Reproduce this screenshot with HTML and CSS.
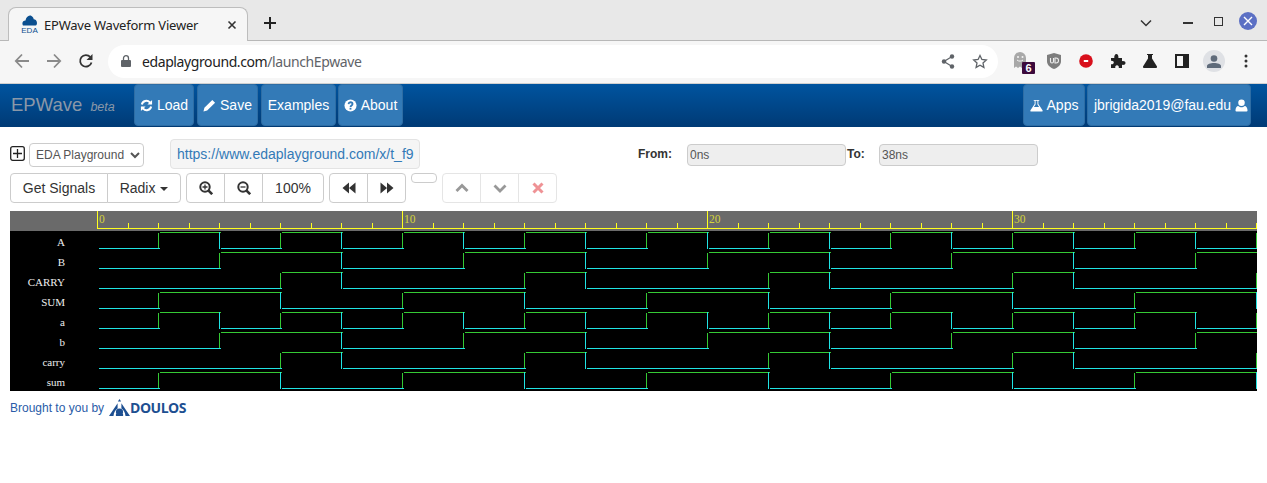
FILE: index.html
```html
<!DOCTYPE html>
<html lang="en">
<head>
  <meta charset="UTF-8" />
  <title>EPWave Waveform Viewer</title>
  <link rel="stylesheet" href="styles.css">
</head>
<body>
  <!-- Browser window -->
  <div class="tabstrip">
    <div class="tab">
      <div class="favicon">
        <svg width="16" height="11" viewBox="0 0 16 11"><path fill="#0b4f8f" d="M1 10.500C-.5 8 1 5.500 3.500 5.500 4 2 7-.5 9.500 1c1.500.8 2 2 2.200 3.300 2.300 0 4 2.600 3 5.200-.2.600-.6 1-1.200 1z"/></svg>
        <span class="favicon-text">EDA</span>
      </div>
      <span class="tab-title">EPWave Waveform Viewer</span>
      <svg class="tab-close" width="10" height="10" viewBox="0 0 10 10"><path stroke="#333" stroke-width="1.600" d="M1.500 1.500l7 7M8.500 1.500l-7 7"/></svg>
    </div>
    <svg class="new-tab" width="14" height="14" viewBox="0 0 14 14"><path stroke="#222" stroke-width="2" d="M7 1v12M1 7h12"/></svg>
    <div class="window-controls">
      <svg class="win-chevron" width="12" height="8" viewBox="0 0 12 8"><path fill="none" stroke="#333" stroke-width="1.500" d="M1 1.500l5 5 5-5"/></svg>
      <span class="win-min"></span>
      <span class="win-max"></span>
      <span class="win-close">
        <svg width="10" height="10" viewBox="0 0 10 10"><path stroke="#fff" stroke-width="1.400" d="M1 1l8 8M9 1l-8 8"/></svg>
      </span>
    </div>
  </div>

  <div class="toolbar">
    <span class="slot"><svg width="16" height="16" viewBox="0 0 16 16"><path fill="none" stroke="#8a8a8a" stroke-width="1.800" d="M15 8H2M8 1.500L1.800 8 8 14.500"/></svg></span>
    <span class="slot"><svg width="16" height="16" viewBox="0 0 16 16"><path fill="none" stroke="#8a8a8a" stroke-width="1.800" d="M1 8h13M8 1.500L14.200 8 8 14.500"/></svg></span>
    <span class="slot"><svg width="16" height="16" viewBox="0 0 16 16"><path fill="none" stroke="#333" stroke-width="1.800" d="M13.500 9.500A5.800 5.800 0 1 1 12.300 4"/><path fill="#333" d="M14.500 1v6h-6z"/></svg></span>
    <div class="omnibox">
      <svg class="lock" width="10" height="12" viewBox="0 0 10 12"><path fill="#5f6368" d="M1 5h8a1 1 0 0 1 1 1v5a1 1 0 0 1-1 1H1a1 1 0 0 1-1-1V6a1 1 0 0 1 1-1z"/><path fill="none" stroke="#5f6368" stroke-width="1.300" d="M2.500 5V3.200a2.500 2.500 0 0 1 5 0V5"/></svg>
      <span class="url">edaplayground.com<span class="url-path">/launchEpwave</span></span>
      <span class="omni-icons">
        <svg width="14" height="15" viewBox="0 0 14 15"><path fill="none" stroke="#5f6368" stroke-width="1.200" d="M11 2.500L3 7.500l8 5"/><circle cx="11" cy="2.500" r="2.200" fill="#5f6368"/><circle cx="3" cy="7.500" r="2.200" fill="#5f6368"/><circle cx="11" cy="12.500" r="2.200" fill="#5f6368"/></svg>
        <svg width="16" height="15" viewBox="0 0 16 15"><path fill="none" stroke="#5f6368" stroke-width="1.300" d="M8 1.500l1.900 4 4.400.5-3.300 3 .9 4.400L8 11.200l-3.900 2.200.9-4.400-3.300-3 4.400-.5z"/></svg>
      </span>
    </div>
    <div class="extensions">
      <span class="slot ghost">
        <svg width="14" height="18" viewBox="0 0 14 18"><path fill="#a8a8a8" d="M1 7a6 6 0 0 1 12 0v10l-2-1.500L9 17l-2-1.500L5 17l-2-1.500L1 17z"/><circle cx="5" cy="6" r="1" fill="#f5f5f5"/><circle cx="9.500" cy="6" r="1" fill="#f5f5f5"/><path fill="none" stroke="#f5f5f5" d="M4 9c1.500 1.500 4.500 1.500 6 0"/></svg>
        <span class="badge">6</span>
      </span>
      <span class="slot"><svg width="14" height="16" viewBox="0 0 14 16"><path fill="#7d7d7d" d="M7 0l7 2v6c0 4-3 6.500-7 8-4-1.500-7-4-7-8V2z"/><path fill="none" stroke="#eee" stroke-width="1.100" d="M3.500 5v3.500a1.500 1.500 0 0 0 3 0V5M8 5v5h1a2.500 2.500 0 0 0 0-5z"/></svg></span>
      <span class="slot"><svg width="14" height="14" viewBox="0 0 14 14"><circle cx="7" cy="7" r="6.800" fill="#d8101c"/><rect x="4.800" y="6" width="4.400" height="2" fill="#fff"/></svg></span>
      <span class="slot"><svg width="16" height="16" viewBox="0 0 16 16"><path fill="#222" d="M1 5h3.300C4 2.800 5 1 6.400 1s2.300 1.800 2 4H12v3.200c2-.4 3.500.4 3.500 1.800S14 12.200 12 11.800V15H8.800c.3-1.700-.6-2.700-1.800-2.700S5 13.300 5.300 15H1v-3.700c1.600.3 2.800-.6 2.800-1.800S2.600 7.500 1 7.800z"/></svg></span>
      <span class="slot"><svg width="14" height="14" viewBox="0 0 14 14"><path fill="#222" d="M4 0h6v1H9v3.500l5 8c.4.800 0 1.500-1 1.500H1c-1 0-1.400-.7-1-1.500l5-8V1H4z"/></svg></span>
      <span class="slot"><svg width="14" height="14" viewBox="0 0 14 14"><path fill="#222" d="M0 0h14v14H0zM2 2v10h6V2z"/></svg></span>
      <span class="slot"><span class="avatar"><svg width="14" height="13" viewBox="0 0 14 13"><circle cx="7" cy="3.500" r="3.300" fill="#5f6b7a"/><path fill="#5f6b7a" d="M0 13v-2c0-2 3.500-3 7-3s7 1 7 3v2z"/></svg></span></span>
      <span class="slot"><svg width="4" height="14" viewBox="0 0 4 14"><circle cx="2" cy="2" r="1.500" fill="#333"/><circle cx="2" cy="7" r="1.500" fill="#333"/><circle cx="2" cy="12" r="1.500" fill="#333"/></svg></span>
    </div>
  </div>

  <!-- Page navbar -->
  <nav class="navbar">
    <div class="brand">EPWave <small>beta</small></div>
    <a class="nav-btn btn-load">
      <svg class="icon" viewBox="0 0 14 14"><path fill="none" stroke="#fff" stroke-width="2.200" d="M2 6a5 5 0 0 1 8.600-2.400L12 5M12 8a5 5 0 0 1-8.600 2.400L2 9"/><path fill="#fff" d="M13 1v5H8zM1 13V8h5z"/></svg>
      Load</a>
    <a class="nav-btn btn-save">
      <svg class="icon" viewBox="0 0 14 14"><path fill="#fff" d="M10 1l3 3-8.500 8.500L.5 13.500l1-4zM9 3.500l1.500 1.500"/></svg>
      Save</a>
    <a class="nav-btn btn-examples">Examples</a>
    <a class="nav-btn btn-about">
      <svg class="icon" viewBox="0 0 14 14"><circle cx="7" cy="7" r="6.500" fill="#fff"/><path fill="none" stroke="#337ab7" stroke-width="1.900" d="M4.800 5.400C5 4 6 3.500 7 3.500c1.200 0 2.200.8 2.200 1.900 0 1.600-2.200 1.600-2.200 3.100"/><rect x="6" y="9.500" width="2" height="1.900" fill="#337ab7"/></svg>
      About</a>
    <a class="nav-btn btn-apps nav-right">
      <svg class="icon" viewBox="0 0 14 14"><path fill="#fff" d="M4 1h6v1H9v3.500l4.500 6.500c.4.800 0 1.500-1 1.500h-11c-1 0-1.400-.7-1-1.500L5 5.500V2H4zM6 2v3.800L4.200 8.500h5.600L8 5.800V2z"/></svg>
      Apps</a>
    <a class="nav-btn btn-user">jbrigida2019@fau.edu
      <svg class="icon" viewBox="0 0 14 14"><circle cx="7" cy="4" r="3.500" fill="#fff"/><path fill="#fff" d="M1.500 13.500c-.6 0-1-.4-1-1 0-3 1.500-5 3-5 1 1 2.300 1.400 3.500 1.400s2.500-.4 3.500-1.400c1.500 0 3 2 3 5 0 .6-.4 1-1 1z"/></svg>
    </a>
  </nav>

  <main class="page">
    <div class="source-row">
      <svg class="expand" width="15" height="15" viewBox="0 0 15 15"><rect x=".7" y=".7" width="13.600" height="13.600" rx="2" fill="none" stroke="#222" stroke-width="1.300"/><path stroke="#222" stroke-width="1.300" d="M7.500 3v9M3 7.500h9"/></svg>
      <select class="source-select"><option>EDA Playground</option></select>
      <div class="run-url">https://www.edaplayground.com/x/t_f9</div>
      <label class="range-label label-from">From:</label>
      <input class="range-input" type="text" value="0ns" readonly />
      <label class="range-label label-to">To:</label>
      <input class="range-input" type="text" value="38ns" readonly />
    </div>

    <div class="button-row">
      <div class="btn-group">
        <button class="btn btn-signals">Get Signals</button>
        <button class="btn btn-radix">Radix <span class="caret"></span></button>
      </div>
      <div class="btn-group">
        <button class="btn btn-icon"><svg class="icon" viewBox="0 0 14 14"><circle cx="6" cy="6" r="4.700" fill="none" stroke="#333" stroke-width="2"/><path stroke="#333" stroke-width="2.600" d="M9.300 9.300l3.900 3.900"/><path stroke="#333" stroke-width="1.300" d="M6 3.500v5M3.500 6h5"/></svg></button>
        <button class="btn btn-icon"><svg class="icon" viewBox="0 0 14 14"><circle cx="6" cy="6" r="4.700" fill="none" stroke="#333" stroke-width="2"/><path stroke="#333" stroke-width="2.600" d="M9.300 9.300l3.900 3.900"/><path stroke="#333" stroke-width="1.300" d="M3.500 6h5"/></svg></button>
        <button class="btn btn-zoom">100%</button>
      </div>
      <div class="btn-group">
        <button class="btn btn-icon"><svg class="icon" viewBox="0 0 14 14"><path fill="#333" d="M7 1.500v11L.5 7zM13.500 1.500v11L7 7z"/></svg></button>
        <button class="btn btn-icon"><svg class="icon" viewBox="0 0 14 14"><path fill="#333" d="M.5 1.500v11L7 7zM7 1.500v11L13.500 7z"/></svg></button>
      </div>
      <button class="btn-empty"></button>
      <div class="btn-group group-disabled">
        <button class="btn btn-icon"><svg class="icon" viewBox="0 0 14 14"><path fill="none" stroke="#333" stroke-width="2.800" d="M1.500 10L7 4.500l5.500 5.500"/></svg></button>
        <button class="btn btn-icon"><svg class="icon" viewBox="0 0 14 14"><path fill="none" stroke="#333" stroke-width="2.800" d="M1.500 4.500L7 10l5.500-5.500"/></svg></button>
        <button class="btn btn-icon btn-remove"><svg class="icon" viewBox="0 0 14 14"><path stroke="#e0282e" stroke-width="3" d="M2.500 2.500l9 9M11.500 2.500l-9 9"/></svg></button>
      </div>
    </div>

    <!-- Waveform canvas, coordinates are page pixels -->
    <svg class="waves" width="1247" height="180" viewBox="10 211 1247 180">
      <defs>
        <g id="sig-a">
          <path class="hi" d="M160 232.500H221M282 232.500H343M404 232.500H465M526 232.500H587M648 232.500H709M770 232.500H831M892 232.500H953M1014 232.500H1075M1136 232.500H1197M158.500 233V249M280.500 233V249M402.500 233V249M524.500 233V249M646.500 233V249M768.500 233V249M890.500 233V249M1012.500 233V249M1134.500 233V249M1256.500 233V249"/>
          <path class="lo" d="M99 248.500H160M221 248.500H282M343 248.500H404M465 248.500H526M587 248.500H648M709 248.500H770M831 248.500H892M953 248.500H1014M1075 248.500H1136M1197 248.500H1258M219.500 232V249M341.500 232V249M463.500 232V249M585.500 232V249M707.500 232V249M829.500 232V249M951.500 232V249M1073.500 232V249M1195.500 232V249"/>
        </g>
        <g id="sig-b">
          <path class="hi" d="M221 232.500H343M465 232.500H587M709 232.500H831M953 232.500H1075M1197 232.500H1258M219.500 233V249M463.500 233V249M707.500 233V249M951.500 233V249M1195.500 233V249"/>
          <path class="lo" d="M99 248.500H221M343 248.500H465M587 248.500H709M831 248.500H953M1075 248.500H1197M341.500 232V249M585.500 232V249M829.500 232V249M1073.500 232V249"/>
        </g>
        <g id="sig-carry">
          <path class="hi" d="M282 232.500H343M526 232.500H587M770 232.500H831M1014 232.500H1075M280.500 233V249M524.500 233V249M768.500 233V249M1012.500 233V249M1256.500 233V249"/>
          <path class="lo" d="M99 248.500H282M343 248.500H526M587 248.500H770M831 248.500H1014M1075 248.500H1258M341.500 232V249M585.500 232V249M829.500 232V249M1073.500 232V249"/>
        </g>
        <g id="sig-sum">
          <path class="hi" d="M160 232.500H282M404 232.500H526M648 232.500H770M892 232.500H1014M1136 232.500H1258M158.500 233V249M402.500 233V249M646.500 233V249M890.500 233V249M1134.500 233V249"/>
          <path class="lo" d="M99 248.500H160M282 248.500H404M526 248.500H648M770 248.500H892M1014 248.500H1136M280.500 232V249M524.500 232V249M768.500 232V249M1012.500 232V249M1256.500 232V249"/>
        </g>
      </defs>

      <rect x="10" y="211" width="1247" height="180" fill="#000"/>
      <rect x="10" y="211" width="1247" height="20" fill="#6a6a6a"/>
      <path class="ruler" d="M97 228.500H1257M97.500 211V229M402.500 211V229M707.500 211V229M1012.500 211V229M128.500 223V228M158.500 223V228M189.500 223V228M219.500 223V228M250.500 223V228M280.500 223V228M311.500 223V228M341.500 223V228M372.500 223V228M433.500 223V228M463.500 223V228M494.500 223V228M524.500 223V228M555.500 223V228M585.500 223V228M616.500 223V228M646.500 223V228M677.500 223V228M738.500 223V228M768.500 223V228M799.500 223V228M829.500 223V228M860.500 223V228M890.500 223V228M921.500 223V228M951.500 223V228M982.500 223V228M1043.500 223V228M1073.500 223V228M1104.500 223V228M1134.500 223V228M1165.500 223V228M1195.500 223V228M1226.500 223V228M1256.500 223V228"/>
      <text class="tick-num" x="99" y="223">0</text>
      <text class="tick-num" x="404" y="223">10</text>
      <text class="tick-num" x="709" y="223">20</text>
      <text class="tick-num" x="1014" y="223">30</text>

      <text class="sig-name" x="65" y="246">A</text>
      <text class="sig-name" x="65" y="266">B</text>
      <text class="sig-name" x="65" y="286">CARRY</text>
      <text class="sig-name" x="65" y="306">SUM</text>
      <text class="sig-name" x="65" y="326">a</text>
      <text class="sig-name" x="65" y="346">b</text>
      <text class="sig-name" x="65" y="366">carry</text>
      <text class="sig-name" x="65" y="386">sum</text>

      <use href="#sig-a"/>
      <use href="#sig-b" y="20"/>
      <use href="#sig-carry" y="40"/>
      <use href="#sig-sum" y="60"/>
      <use href="#sig-a" y="80"/>
      <use href="#sig-b" y="100"/>
      <use href="#sig-carry" y="120"/>
      <use href="#sig-sum" y="140"/>
    </svg>

    <div class="credit">
      <a class="credit-link">Brought to you by</a>
      <span class="doulos">
        <svg width="21" height="17" viewBox="0 0 21 17"><path fill="#1d4f91" d="M10.500 0l1.600 2.600H8.900zM8.600 4.200L0 17h4.500c.3-3.500 1.800-6 4.100-7.500zM12.400 4.200L21 17h-4.500c-.3-3.500-1.800-6-4.100-7.500z"/><circle cx="10.500" cy="13" r="3.600" fill="#1d4f91"/><rect x="6.900" y="15" width="7.200" height="2" fill="#1d4f91"/></svg>
        <span class="doulos-name">DOULOS</span>
      </span>
    </div>
  </main>
</body>
</html>
```

FILE: styles.css
```css
/* Base styles */
* {
  box-sizing: border-box;
}

body {
  margin: 0;
  font-family: "Liberation Sans", Arial, sans-serif;
  font-size: 14px;
  color: #333;
  background: #fff;
}

/* Browser window */
.tabstrip {
  display: flex;
  align-items: flex-end;
  height: 41px;
  background: #e8e8e8;
  border-bottom: 1px solid #b8b8b8;
}

.tab {
  display: flex;
  align-items: center;
  width: 240px;
  height: 34px;
  margin-left: 8px;
  margin-bottom: -1px;
  padding-left: 12px;
  background: #f6f6f6;
  border: 1px solid #bdbdbd;
  border-bottom: none;
  border-radius: 8px 8px 0 0;
  font-family: "Noto Sans", sans-serif;
  font-size: 13px;
  letter-spacing: -0.22px;
  color: #222;
}

.favicon {
  display: flex;
  flex-direction: column;
  align-items: center;
  width: 17px;
  margin-right: 6px;
}

.favicon svg {
  display: block;
}

.favicon-text {
  font-family: "Liberation Sans", sans-serif;
  font-size: 8px;
  line-height: 8px;
  letter-spacing: 0;
  margin-top: 1px;
  color: #0b4f8f;
}

.tab-close {
  margin-left: auto;
  margin-right: 10px;
}

.new-tab {
  margin-left: 15px;
  margin-bottom: 10px;
}

.window-controls {
  display: flex;
  align-items: center;
  margin-left: auto;
  height: 40px;
  padding-top: 2px;
  padding-right: 10px;
}

.win-chevron {
  margin-top: 4px;
  margin-right: 31px;
}

.win-min {
  width: 10px;
  height: 2px;
  margin-top: 4px;
  margin-right: 21px;
  background: #333;
}

.win-max {
  width: 9px;
  height: 9px;
  margin-right: 16px;
  border: 1.500px solid #333;
}

.win-close {
  display: flex;
  align-items: center;
  justify-content: center;
  width: 18px;
  height: 18px;
  border-radius: 50%;
  background: #5c70c4;
}

.toolbar {
  display: flex;
  align-items: center;
  height: 43px;
  padding: 0 5px 2px 6px;
  background: #f6f6f6;
  border-bottom: 1px solid #d0d0d0;
}

.slot {
  display: flex;
  align-items: center;
  justify-content: center;
  position: relative;
  width: 32px;
  height: 32px;
}

.omnibox {
  display: flex;
  align-items: center;
  flex: 1;
  height: 33px;
  margin-left: 6px;
  padding-left: 13px;
  background: #fff;
  border-radius: 17px;
  font-family: "Noto Sans", sans-serif;
  font-size: 14px;
  letter-spacing: -0.4px;
  color: #222;
}

.url {
  margin-left: 11px;
}

.url-path {
  color: #5f6368;
}

.omni-icons {
  display: flex;
  align-items: center;
  gap: 17px;
  margin-left: auto;
  margin-right: 10px;
}

.extensions {
  display: flex;
  margin-left: 8px;
}

.badge {
  position: absolute;
  top: 17px;
  left: 16px;
  width: 13px;
  height: 12px;
  background: #3c0a3c;
  border-radius: 1px;
  font-family: "Liberation Sans", sans-serif;
  font-size: 11px;
  font-weight: bold;
  line-height: 12px;
  text-align: center;
  color: #fff;
}

.ghost svg {
  margin-top: -3px;
  margin-left: -4px;
}

.avatar {
  display: flex;
  align-items: center;
  justify-content: center;
  width: 22px;
  height: 22px;
  border-radius: 50%;
  background: #dfe1e5;
}

/* Navbar */
.navbar {
  display: flex;
  height: 43px;
  background: linear-gradient(to bottom, #00549f, #003a75);
}

.brand {
  width: 134px;
  padding-left: 11px;
  font-size: 18.500px;
  line-height: 42px;
  color: #8a98a8;
}

.brand small {
  margin-left: 3px;
  font-size: 12.500px;
  font-style: italic;
}

.nav-btn {
  display: flex;
  align-items: center;
  justify-content: center;
  gap: 4px;
  height: 42px;
  margin-right: 3px;
  background: #337ab7;
  border: 1px solid #2e6da4;
  border-radius: 4px;
  color: #fff;
}

.btn-load { width: 60px; }
.btn-save { width: 61px; }
.btn-examples { width: 75px; margin-right: 2px; }
.btn-about { width: 65px; }
.btn-apps { width: 62px; margin-right: 2px; }
.btn-user { width: 164px; padding-left: 4px; }

.nav-right {
  margin-left: auto;
}

.navbar .btn-user {
  margin-right: 16px;
}

.icon {
  width: 13px;
  height: 13px;
  flex: none;
}

/* Page controls */
.page {
  padding: 12px 10px 0;
}

.source-row {
  display: flex;
  align-items: center;
  height: 30px;
}

.expand {
  flex: none;
  margin-right: 4px;
  margin-top: -1px;
}

.source-select {
  width: 115px;
  height: 24px;
  margin-top: 2px;
  padding-left: 2px;
  font-family: "Liberation Sans", sans-serif;
  font-size: 12px;
  color: #555;
  background: #fff;
  border: 1px solid #ccc;
  border-radius: 4px;
}

.run-url {
  width: 250px;
  height: 30px;
  margin-left: 26px;
  padding-left: 6px;
  overflow: hidden;
  white-space: nowrap;
  font-size: 14px;
  line-height: 28px;
  color: #337ab7;
  background: #f5f5f5;
  border: 1px solid #e3e3e3;
  border-radius: 4px;
}

.range-label {
  font-size: 12px;
  font-weight: bold;
}

.label-from {
  margin-left: 218px;
  width: 49px;
}

.label-to {
  width: 33px;
  padding-left: 1px;
}

.range-input {
  width: 159px;
  height: 22px;
  margin-top: 1px;
  padding: 0 2px;
  font-family: "Liberation Sans", sans-serif;
  font-size: 12px;
  color: #555;
  background: #eee;
  border: 1px solid #ccc;
  border-radius: 4px;
}

.button-row {
  display: flex;
  align-items: flex-start;
  gap: 5px;
  margin-top: 4px;
}

.btn-group {
  display: flex;
}

.btn {
  height: 30px;
  margin-left: -1px;
  padding: 0;
  font-family: "Liberation Sans", sans-serif;
  font-size: 14px;
  color: #333;
  background: #fff;
  border: 1px solid #ccc;
}

.btn:first-child {
  margin-left: 0;
  border-radius: 4px 0 0 4px;
}

.btn:last-child {
  border-radius: 0 4px 4px 0;
}

.btn .icon {
  display: block;
  width: 14px;
  height: 14px;
  margin: 0 auto;
}

.btn-signals { width: 98px; }
.btn-radix { width: 74px; }
.btn-icon { width: 39px; }
.btn-zoom { width: 62px; }

.caret {
  display: inline-block;
  margin-left: 1px;
  vertical-align: middle;
  border-top: 4px solid #333;
  border-left: 4px solid transparent;
  border-right: 4px solid transparent;
}

.btn-empty {
  width: 26px;
  height: 10px;
  padding: 0;
  background: #fff;
  border: 1px solid #ccc;
  border-radius: 4px;
}

.group-disabled {
  opacity: 0.5;
}

/* Waveforms */
.waves {
  display: block;
  margin-top: 8px;
}

.hi, .lo, .ruler {
  fill: none;
  stroke-width: 1;
}

.hi { stroke: #35c935; }
.lo { stroke: #20e4e4; }
.ruler { stroke: #ffff1e; }

.tick-num {
  font-family: "Liberation Serif", serif;
  font-size: 11.500px;
  fill: #d4d43a;
}

.sig-name {
  font-family: "Liberation Serif", serif;
  font-size: 11px;
  text-anchor: end;
  fill: #eee;
}

/* Footer */
.credit {
  display: flex;
  align-items: center;
  margin-top: 7px;
  font-size: 12px;
}

.credit-link {
  color: #2a5ca8;
}

.doulos {
  display: flex;
  align-items: center;
  margin-left: 5px;
}

.doulos-name {
  font-family: "Open Sans", sans-serif;
  font-size: 14px;
  font-weight: bold;
  letter-spacing: -0.5px;
  color: #1d4f91;
}
```
